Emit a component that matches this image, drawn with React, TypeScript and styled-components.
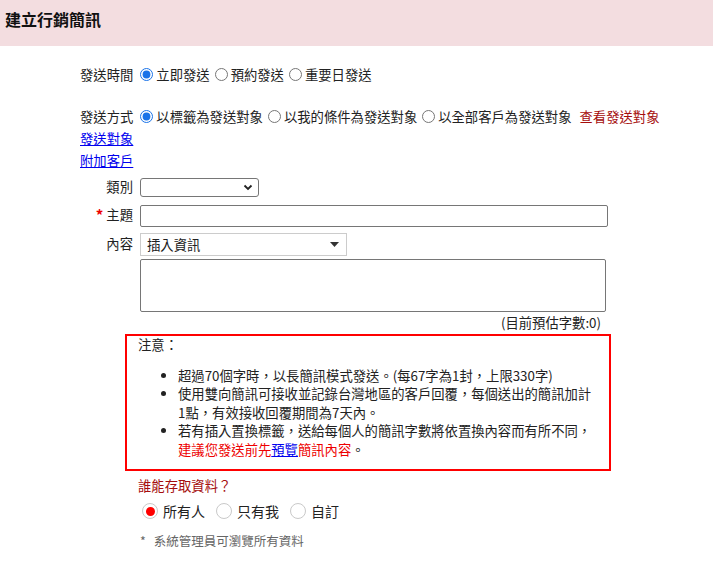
import React from "react";
import styled, { createGlobalStyle } from "styled-components";

const GlobalStyle = createGlobalStyle`
  body {
    margin: 0;
    background: #fff;
    color: #222;
    font-family: "Noto Sans CJK TC", "Noto Sans", "Liberation Sans", sans-serif;
    font-size: 13.33px;
  }
`;

const PageHeader = styled.div`
  height: 46px;
  box-sizing: border-box;
  background: #f3dde0;
  padding: 7px 0 0 5px;
  line-height: 24px;
  font-size: 16px;
  font-weight: bold;
  color: #111;
`;

const Body = styled.div`
  padding: 18px 0 0 80px;
`;

const OptionRow = styled.div<{ $gap?: number }>`
  display: flex;
  align-items: center;
  height: 20px;
  margin-bottom: ${(p) => p.$gap ?? 0}px;
  white-space: nowrap;
`;

const RowLabel = styled.span`
  margin-right: 2px;
`;

const Choice = styled.label`
  display: inline-flex;
  align-items: center;
  input {
    margin: 0 3px 0 5px;
    width: 13px;
    height: 13px;
    accent-color: #1a73e8;
  }
`;

const ViewLink = styled.span`
  color: #a50d0d;
  margin-left: 8px;
`;

const BlueLink = styled.a`
  display: block;
  width: fit-content;
  color: #0000ee;
  text-decoration: underline;
  line-height: 22px;
`;

const FormGrid = styled.div`
  display: grid;
  grid-template-columns: 53px auto;
  column-gap: 7px;
  margin-top: 1px;
  width: 530px;
`;

const FieldLabel = styled.div<{ $h?: number }>`
  display: flex;
  justify-content: flex-end;
  align-items: center;
  height: ${(p) => p.$h ?? 28}px;
  padding-bottom: 2px;
  box-sizing: border-box;
`;

const Star = styled.span`
  color: #e00;
  margin-right: 3px;
  font-weight: bold;
  font-size: 15px;
`;

const FieldCell = styled.div<{ $h?: number }>`
  display: flex;
  align-items: center;
  height: ${(p) => p.$h ?? 28}px;
`;

const CategorySelect = styled.div`
  width: 119px;
  height: 19px;
  box-sizing: border-box;
  border: 1px solid #767676;
  border-radius: 3px;
  display: flex;
  justify-content: flex-end;
  align-items: center;
  padding-right: 5px;
`;

const TextInput = styled.div`
  width: 468px;
  height: 22px;
  box-sizing: border-box;
  border: 1px solid #767676;
  border-radius: 2px;
`;

const InsertSelect = styled.div`
  width: 207px;
  height: 23px;
  box-sizing: border-box;
  border: 1px solid #ccc;
  display: flex;
  align-items: center;
  justify-content: space-between;
  padding: 0 7px 0 6px;
`;

const TextArea = styled.div`
  grid-column: 2;
  width: 466px;
  height: 53px;
  box-sizing: border-box;
  border: 1px solid #767676;
  border-radius: 2px;
  margin-top: 1px;
`;

const CharCount = styled.div`
  grid-column: 2;
  width: 461px;
  text-align: right;
  line-height: 21px;
  margin-bottom: 1px;
`;

const NoticeBox = styled.div`
  margin-left: 45px;
  width: 486px;
  box-sizing: border-box;
  border: 2px solid #f00;
  padding: 0 13px 10px 11px;
  line-height: 18.5px;
`;

const NoticeTitle = styled.div`
  margin-bottom: 12px;
`;

const NoticeList = styled.ul`
  margin: 0;
  padding-left: 40px;
  li {
    margin: 0;
  }
`;

const Warn = styled.span`
  color: #e00;
`;

const PreviewLink = styled.a`
  color: #0000ee;
  text-decoration: underline;
`;

const AccessBlock = styled.div`
  margin: 5px 0 0 58px;
`;

const AccessTitle = styled.div`
  color: #a50d0d;
  line-height: 20px;
`;

const AccessRow = styled.div`
  display: flex;
  align-items: center;
  margin-top: 3px;
  height: 24px;
  font-size: 14px;
`;

const AccessChoice = styled.span`
  display: inline-flex;
  align-items: center;
  margin-right: 7px;
`;

const Circle = styled.span<{ $on?: boolean }>`
  width: 16px;
  height: 16px;
  box-sizing: border-box;
  border-radius: 50%;
  border: 1px solid #c9c9c9;
  display: inline-flex;
  align-items: center;
  justify-content: center;
  margin: 0 5px 0 4px;
  &::after {
    content: "";
    width: 9px;
    height: 9px;
    border-radius: 50%;
    background: ${(p) => (p.$on ? "#f00" : "transparent")};
  }
`;

const AccessNote = styled.div`
  color: #666;
  font-size: 12.5px;
  margin: 9px 0 0 2px;
  line-height: 17px;
`;

const NoteStar = styled.span`
  margin-right: 8px;
`;

const Caret = () => (
  <svg width="10" height="7" viewBox="0 0 10 7">
    <path d="M1.5 1.5 L5 5 L8.5 1.5" fill="none" stroke="#222" strokeWidth="1.8" />
  </svg>
);

const Triangle = () => (
  <svg width="9" height="5" viewBox="0 0 9 5">
    <path d="M0 0 H9 L4.5 5 Z" fill="#333" />
  </svg>
);

export default function App() {
  return (
    <>
      <GlobalStyle />
      <PageHeader>建立行銷簡訊</PageHeader>
      <Body>
        <OptionRow $gap={22}>
          <RowLabel>發送時間</RowLabel>
          <Choice>
            <input type="radio" name="time" defaultChecked />
            立即發送
          </Choice>
          <Choice>
            <input type="radio" name="time" />
            預約發送
          </Choice>
          <Choice>
            <input type="radio" name="time" />
            重要日發送
          </Choice>
        </OptionRow>
        <OptionRow $gap={2}>
          <RowLabel>發送方式</RowLabel>
          <Choice>
            <input type="radio" name="target" defaultChecked />
            以標籤為發送對象
          </Choice>
          <Choice>
            <input type="radio" name="target" />
            以我的條件為發送對象
          </Choice>
          <Choice>
            <input type="radio" name="target" />
            以全部客戶為發送對象
          </Choice>
          <ViewLink>查看發送對象</ViewLink>
        </OptionRow>
        <BlueLink href="#">發送對象</BlueLink>
        <BlueLink href="#">附加客戶</BlueLink>
        <FormGrid>
          <FieldLabel>類別</FieldLabel>
          <FieldCell>
            <CategorySelect>
              <Caret />
            </CategorySelect>
          </FieldCell>
          <FieldLabel $h={29}>
            <Star>*</Star>主題
          </FieldLabel>
          <FieldCell $h={29}>
            <TextInput />
          </FieldCell>
          <FieldLabel>內容</FieldLabel>
          <FieldCell>
            <InsertSelect>
              <span>插入資訊</span>
              <Triangle />
            </InsertSelect>
          </FieldCell>
          <TextArea />
          <CharCount>(目前預估字數:0)</CharCount>
        </FormGrid>
        <NoticeBox>
          <NoticeTitle>注意：</NoticeTitle>
          <NoticeList>
            <li>超過70個字時，以長簡訊模式發送。(每67字為1封，上限330字)</li>
            <li>使用雙向簡訊可接收並記錄台灣地區的客戶回覆，每個送出的簡訊加計1點，有效接收回覆期間為7天內。</li>
            <li>
              若有插入置換標籤，送給每個人的簡訊字數將依置換內容而有所不同，
              <Warn>建議您發送前先</Warn>
              <PreviewLink href="#">預覽</PreviewLink>
              <Warn>簡訊內容</Warn>。
            </li>
          </NoticeList>
        </NoticeBox>
        <AccessBlock>
          <AccessTitle>誰能存取資料？</AccessTitle>
          <AccessRow>
            <AccessChoice>
              <Circle $on />
              所有人
            </AccessChoice>
            <AccessChoice>
              <Circle />
              只有我
            </AccessChoice>
            <AccessChoice>
              <Circle />
              自訂
            </AccessChoice>
          </AccessRow>
          <AccessNote>
            <NoteStar>*</NoteStar>系統管理員可瀏覽所有資料
          </AccessNote>
        </AccessBlock>
      </Body>
    </>
  );
}
